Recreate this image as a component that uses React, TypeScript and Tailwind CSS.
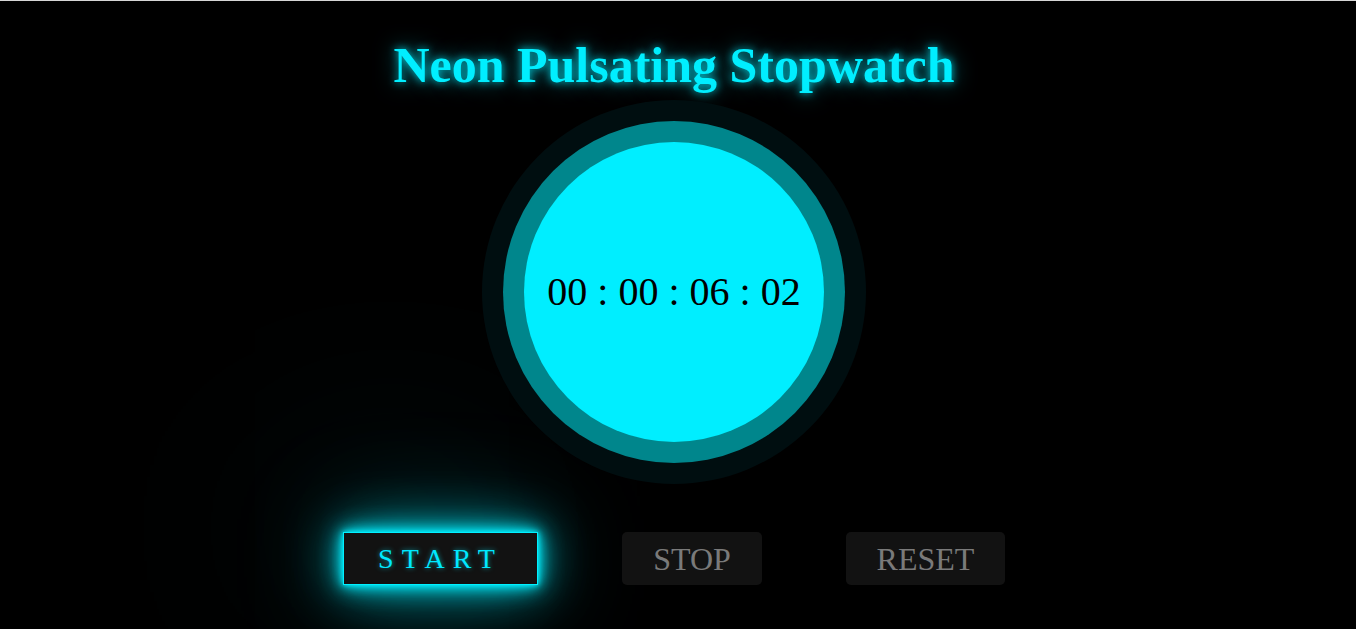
import React from 'react';

const serif = '"Liberation Serif", "Times New Roman", serif';

const App = () => {
  return (
    <div className="min-h-screen bg-black overflow-hidden" style={{ fontFamily: serif }}>
      <div className="h-px bg-[#d6d6d6]" />

      <div className="flex flex-col items-center pr-[8px]">
        {/* Title */}
        <h1 className="mt-[31px] text-[50px] leading-[66px] font-bold text-[#00eeff] [text-shadow:0_0_8px_rgba(0,238,255,0.8),0_0_22px_rgba(0,238,255,0.5)]">
          Neon Pulsating Stopwatch
        </h1>

        {/* Dial */}
        <div className="relative z-10 mt-[44px] w-[300px] h-[300px] rounded-full bg-[#00eeff] flex items-center justify-center shadow-[0_0_0_21px_#00868c,0_0_0_42px_#000e10]">
          <span className="text-[40px] text-black">00 : 00 : 06 : 02</span>
        </div>

        {/* Controls */}
        <div className="mt-[90px] flex items-center gap-[84px]">
          <button className="h-[53px] w-[195px] bg-[#121212] border border-[#00f0ff] text-[#00e8ff] text-[28px] tracking-[8px] flex items-center justify-center [text-shadow:0_0_5px_rgba(0,238,255,0.6)] shadow-[0_0_5px_#00f0ff,0_0_12px_#00eeff,0_0_25px_#00e0f0,0_0_55px_rgba(0,215,230,0.8),0_0_110px_rgba(0,200,215,0.4),-50px_-30px_220px_rgba(0,238,255,0.22)]">
            START
          </button>
          <button className="h-[53px] w-[140px] rounded-[5px] bg-[#121212] text-[#7a7a7a] text-[32px] flex items-center justify-center">
            STOP
          </button>
          <button className="h-[53px] w-[159px] rounded-[5px] bg-[#121212] text-[#7a7a7a] text-[32px] flex items-center justify-center">
            RESET
          </button>
        </div>
      </div>
    </div>
  );
};

export default App;
